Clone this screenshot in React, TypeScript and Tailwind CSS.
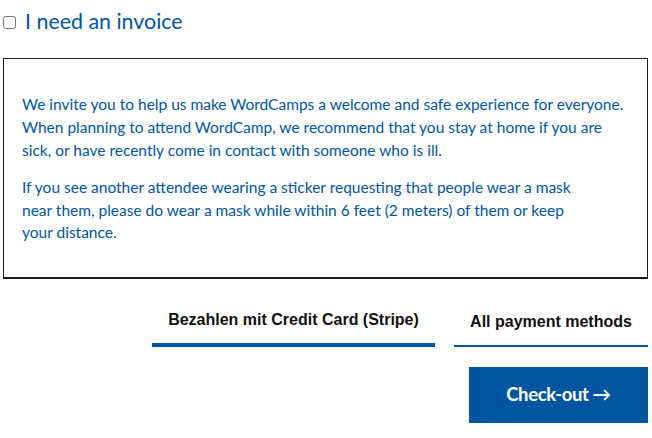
import { useState } from "react";

export default function App() {
  const [invoice, setInvoice] = useState(false);
  const [tab, setTab] = useState("stripe");

  return (
    <div className="min-h-screen bg-white pl-[3px] pr-[4px] font-['Lato','Noto_Sans',sans-serif] text-[#0055a4]">
      <label className="flex h-[43px] items-center gap-[9px] pt-[1px]">
        <input
          type="checkbox"
          checked={invoice}
          onChange={(e) => setInvoice(e.target.checked)}
          className="m-0 h-[13px] w-[13px]"
        />
        <span className="text-[21.4px] leading-none">I need an invoice</span>
      </label>

      <div className="mt-[15px] border border-b-2 border-[#1e1e1e] pl-[18px] pr-[10px] pt-[34px] pb-[33px] text-[15.5px] leading-[23px]">
        <p className="whitespace-nowrap">
          We invite you to help us make WordCamps a welcome and safe experience for everyone.
          <br />
          When planning to attend WordCamp, we recommend that you stay at home if you are
          <br />
          sick, or have recently come in contact with someone who is ill.
        </p>
        <p className="mt-[14px] whitespace-nowrap leading-[22.5px]">
          If you see another attendee wearing a sticker requesting that people wear a mask
          <br />
          near them, please do wear a mask while within 6 feet (2 meters) of them or keep
          <br />
          your distance.
        </p>
      </div>

      <div className="mt-[24px] flex justify-end gap-[19px] font-['Liberation_Sans',Arial,sans-serif] text-[16px] font-bold text-[#111]">
        <button
          onClick={() => setTab("stripe")}
          className={
            "flex h-[44px] w-[283px] items-start justify-center pt-[5px] " +
            (tab === "stripe" ? "border-b-4 border-[#0055a4]" : "border-b-2 border-[#0055a4]")
          }
        >
          Bezahlen mit Credit Card (Stripe)
        </button>
        <button
          onClick={() => setTab("all")}
          className={
            "flex h-[44px] w-[194px] items-start justify-center pt-[7px] " +
            (tab === "all" ? "border-b-4 border-[#0055a4]" : "border-b-2 border-[#0055a4]")
          }
        >
          All payment methods
        </button>
      </div>

      <div className="mt-[20px] flex justify-end">
        <button className="flex h-[56px] w-[179px] items-center justify-center bg-[#0055a0] text-[18.5px] font-bold tracking-[-0.4px] text-white">
          Check-out →
        </button>
      </div>
    </div>
  );
}
